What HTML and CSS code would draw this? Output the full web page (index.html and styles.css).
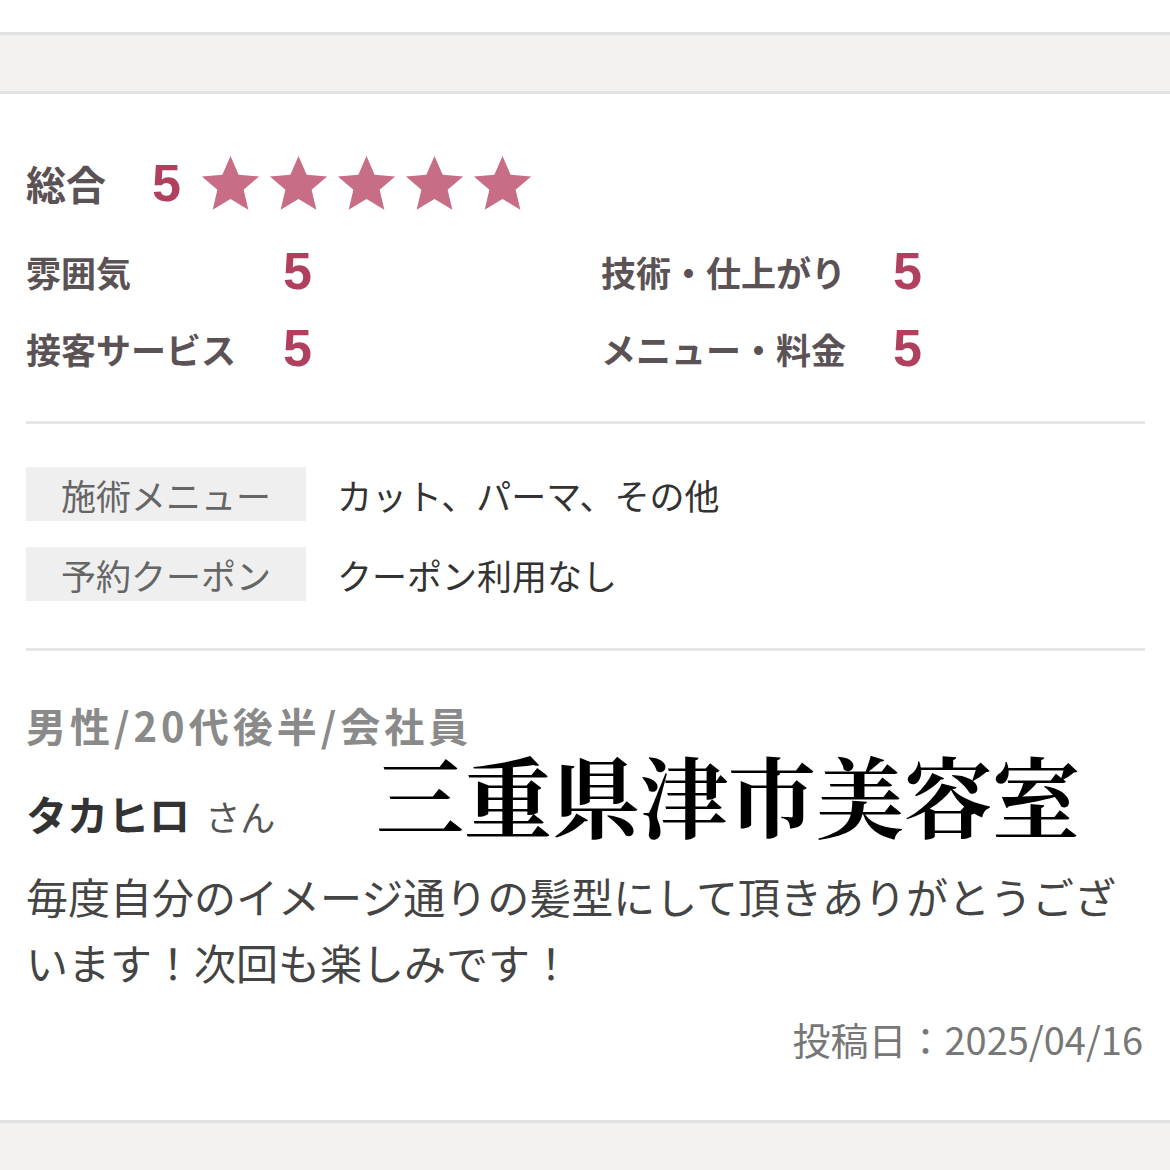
FILE: index.html
```html
<!DOCTYPE html>
<html lang="ja">

<head>
    <meta charset="UTF-8">
    <meta name="viewport" content="width=device-width, initial-scale=1.0">
    <title>口コミ</title>
    <link rel="stylesheet" href="styles.css">
</head>

<body>
    <div class="top-space"></div>
    <div class="band"></div>

    <div class="review">
        <div class="overall">
            <span class="overall-label">総合</span>
            <span class="overall-score">5</span>
            <span class="stars">
                <svg class="star" viewBox="0 0 24 24"><path d="M12 1.5l3.1 7.2 7.8.6-5.9 5.1 1.8 7.6L12 17.9 5.2 22l1.8-7.6L1.1 9.3l7.8-.6z"/></svg>
                <svg class="star" viewBox="0 0 24 24"><path d="M12 1.5l3.1 7.2 7.8.6-5.9 5.1 1.8 7.6L12 17.9 5.2 22l1.8-7.6L1.1 9.3l7.8-.6z"/></svg>
                <svg class="star" viewBox="0 0 24 24"><path d="M12 1.5l3.1 7.2 7.8.6-5.9 5.1 1.8 7.6L12 17.9 5.2 22l1.8-7.6L1.1 9.3l7.8-.6z"/></svg>
                <svg class="star" viewBox="0 0 24 24"><path d="M12 1.5l3.1 7.2 7.8.6-5.9 5.1 1.8 7.6L12 17.9 5.2 22l1.8-7.6L1.1 9.3l7.8-.6z"/></svg>
                <svg class="star" viewBox="0 0 24 24"><path d="M12 1.5l3.1 7.2 7.8.6-5.9 5.1 1.8 7.6L12 17.9 5.2 22l1.8-7.6L1.1 9.3l7.8-.6z"/></svg>
            </span>
        </div>

        <div class="scores">
            <span class="score-label">雰囲気</span>
            <span class="score-value">5</span>
            <span class="score-label">技術・仕上がり</span>
            <span class="score-value">5</span>
            <span class="score-label">接客サービス</span>
            <span class="score-value">5</span>
            <span class="score-label">メニュー・料金</span>
            <span class="score-value">5</span>
        </div>

        <hr class="divider divider-first">

        <div class="info">
            <div class="info-row">
                <span class="info-tag">施術メニュー</span>
                <span class="info-text">カット、パーマ、その他</span>
            </div>
            <div class="info-row">
                <span class="info-tag">予約クーポン</span>
                <span class="info-text">クーポン利用なし</span>
            </div>
        </div>

        <hr class="divider divider-second">

        <p class="profile">男性/20代後半/会社員</p>
        <p class="name">タカヒロ <span class="honorific">さん</span></p>
        <p class="comment">毎度自分のイメージ通りの髪型にして頂きありがとうございます！次回も楽しみです！</p>
        <p class="posted">投稿日：2025/04/16</p>

        <div class="watermark">三重県津市美容室</div>
    </div>

    <div class="band band-bottom"></div>
</body>

</html>
```

FILE: styles.css
```css
body {
    margin: 0;
    font-family: "Noto Sans CJK JP", "Noto Sans", sans-serif;
    background: #fff;
    color: #333;
}

p {
    margin: 0;
}

.top-space {
    height: 32px;
}

.band {
    height: 56px;
    background-color: #f3f2f1;
    border-top: 3px solid #e3e2e2;
    border-bottom: 3px solid #e3e2e2;
}

.band-bottom {
    height: 60px;
    border-bottom: none;
}

.review {
    position: relative;
    padding: 0 25px 0 26px;
    overflow: hidden;
}

/* overall rating */
.overall {
    display: flex;
    align-items: center;
    height: 62px;
    margin-top: 58px;
}

.overall-label {
    font-size: 40px;
    font-weight: 700;
    color: #5b5255;
    line-height: 1;
}

.overall-score {
    font-family: "Liberation Sans", Arial, sans-serif;
    font-size: 52px;
    font-weight: 700;
    color: #b0405e;
    margin-left: 46px;
    line-height: 1;
}

.stars {
    display: flex;
    gap: 5px;
    margin-left: 18px;
}

.star {
    width: 63px;
    height: 63px;
    fill: #c76d86;
}

/* sub scores */
.scores {
    display: grid;
    grid-template-columns: 257px 318px 292px auto;
    grid-auto-rows: 50px;
    row-gap: 27px;
    align-items: center;
    margin-top: 32px;
}

.score-label {
    font-size: 35px;
    font-weight: 700;
    color: #5b5255;
    line-height: 1;
}

.score-value {
    font-family: "Liberation Sans", Arial, sans-serif;
    font-size: 52px;
    font-weight: 700;
    color: #b0405e;
    line-height: 1;
}

.divider {
    border: none;
    height: 3px;
    background-color: #e6e6e6;
    margin: 0;
}

.divider-first {
    margin-top: 48px;
}

.divider-second {
    margin-top: 47px;
}

/* menu / coupon */
.info {
    display: flex;
    flex-direction: column;
    gap: 26px;
    margin-top: 43px;
}

.info-row {
    display: flex;
    align-items: center;
}

.info-tag {
    width: 280px;
    height: 54px;
    display: flex;
    align-items: center;
    justify-content: center;
    background-color: #efefef;
    font-size: 35px;
    color: #666;
}

.info-text {
    margin-left: 31px;
    font-size: 35px;
    color: #333;
}

/* reviewer */
.profile {
    margin-top: 52px;
    font-size: 40px;
    font-weight: 700;
    line-height: 44px;
    letter-spacing: 4px;
    color: #8a8a8a;
}

.name {
    margin-top: 41px;
    font-size: 41px;
    font-weight: 700;
    line-height: 50px;
    color: #333;
}

.honorific {
    font-size: 35px;
    font-weight: 400;
    color: #555;
    margin-left: 6px;
}

.comment {
    margin-top: 22px;
    font-size: 42px;
    line-height: 66px;
    color: #444;
}

.posted {
    margin-top: 19px;
    margin-bottom: 56px;
    text-align: right;
    font-size: 38px;
    line-height: 50px;
    color: #777;
    padding-right: 2px;
}

/* overlay caption */
.watermark {
    position: absolute;
    left: 376px;
    top: 661px;
    font-family: "Noto Serif CJK JP", "Noto Sans CJK JP", serif;
    font-size: 88px;
    font-weight: 700;
    line-height: 76px;
    color: #000;
    white-space: nowrap;
}
```
